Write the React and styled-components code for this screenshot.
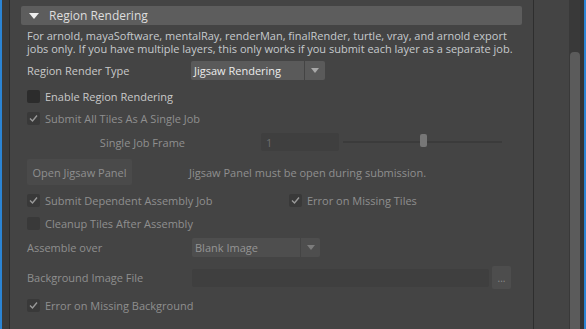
import React from "react";
import styled, { createGlobalStyle } from "styled-components";

const GlobalStyle = createGlobalStyle`
  html, body {
    margin: 0;
    padding: 0;
    background: #444444;
  }
  body {
    font-family: "Open Sans", "Liberation Sans", sans-serif;
    font-size: 11px;
  }
`;

const Page = styled.div`
  display: flex;
  width: 586px;
  height: 329px;
  overflow: hidden;
  background: #444444;
`;
const BlueEdge = styled.div`
  width: 2px;
  background: #2b84d4;
`;
const LeftGutter = styled.div`
  width: 7px;
  background: #3a3a3a;
  border-right: 1px solid #2a2a2a;
`;
const Content = styled.div`
  flex: 1;
  display: flex;
  flex-direction: column;
  padding: 6px 11px 0 11px;
  border-right: 1px solid #2e2e2e;
`;
const Spacer = styled.div`
  width: 35px;
`;
const ScrollTrack = styled.div`
  width: 11px;
  background: #393939;
  display: flex;
  flex-direction: column;
  justify-content: flex-end;
`;
const ScrollThumb = styled.div`
  height: 277px;
  margin: 0 0 0 1px;
  background: #5b5b5b;
  border-radius: 4px 4px 0 0;
`;
const DarkEdge = styled.div`
  width: 4px;
  background: #343434;
`;

const Header = styled.div`
  height: 19px;
  display: flex;
  align-items: center;
  background: #5d5d5d;
  border-radius: 2px;
  color: #dedede;
  font-size: 12px;
  padding-left: 8px;
`;
const Caret = styled.span`
  width: 0;
  height: 0;
  border-left: 5px solid transparent;
  border-right: 5px solid transparent;
  border-top: 6px solid #eeeeee;
  margin-right: 10px;
`;

const Body = styled.div`
  display: flex;
  flex-direction: column;
  padding-left: 6px;
`;
const Description = styled.p`
  margin: 4px 0 0 0;
  line-height: 13px;
  color: #c6cacd;
`;
const Row = styled.div`
  display: flex;
  align-items: center;
  height: ${(p) => p.$h || 18}px;
  margin-top: ${(p) => p.$mt || 0}px;
`;
const Label = styled.span`
  width: ${(p) => p.$w || 164}px;
  flex-shrink: 0;
  color: ${(p) => (p.$disabled ? "#8f8f8f" : "#c9c9c9")};
  text-align: ${(p) => (p.$right ? "right" : "left")};
  padding-right: ${(p) => (p.$right ? 76 : 0)}px;
  box-sizing: border-box;
`;
const Text = styled.span`
  color: ${(p) => (p.$disabled ? "#8f8f8f" : "#c9c9c9")};
  margin-left: ${(p) => p.$ml || 0}px;
`;

const Box = styled.span`
  width: 13px;
  height: 13px;
  border-radius: 2px;
  background: ${(p) => (p.$disabled ? "#393939" : "#2c2c2c")};
  display: inline-flex;
  align-items: center;
  justify-content: center;
  flex-shrink: 0;
  margin-left: ${(p) => p.$ml || 0}px;
  margin-right: 5px;
`;
const CheckGroup = styled.label`
  display: flex;
  align-items: center;
  width: ${(p) => (p.$w ? p.$w + "px" : "auto")};
`;

const Checkbox = ({ checked, disabled, label, ml, w }) => (
  <CheckGroup $w={w}>
    <Box $disabled={disabled} $ml={ml}>
      {checked && (
        <svg width="11" height="11" viewBox="0 0 11 11">
          <path d="M2 5.5 L4.5 8 L9 2.5" fill="none" stroke={disabled ? "#9a9a9a" : "#d0d0d0"} strokeWidth="1.4" />
        </svg>
      )}
    </Box>
    <Text $disabled={disabled}>{label}</Text>
  </CheckGroup>
);

const Select = styled.div`
  display: flex;
  height: 19px;
  gap: 1px;
`;
const SelectValue = styled.div`
  width: ${(p) => p.$w}px;
  background: ${(p) => (p.$disabled ? "#4e4e4e" : "#5a5a5a")};
  color: ${(p) => (p.$disabled ? "#959595" : "#ececec")};
  display: flex;
  align-items: center;
  padding-left: 3px;
  box-sizing: border-box;
  border-radius: 2px 0 0 2px;
`;
const SelectArrow = styled.div`
  width: ${(p) => p.$w}px;
  background: ${(p) => (p.$disabled ? "#4e4e4e" : "#5a5a5a")};
  display: flex;
  align-items: center;
  justify-content: center;
  border-radius: 0 2px 2px 0;
  &::after {
    content: "";
    border-left: 4px solid transparent;
    border-right: 4px solid transparent;
    border-top: 5px solid ${(p) => (p.$disabled ? "#7c7c7c" : "#a8a8a8")};
  }
`;

const Field = styled.div`
  width: ${(p) => p.$w}px;
  height: 18px;
  background: #3f3f3f;
  border-radius: 2px;
  color: #6e6e6e;
  display: flex;
  align-items: center;
  padding-left: 5px;
  box-sizing: border-box;
  margin-left: ${(p) => p.$ml || 0}px;
`;
const Slider = styled.div`
  position: relative;
  width: 159px;
  height: 2px;
  background: #3b3b3b;
  margin-left: 4px;
`;
const SliderThumb = styled.div`
  position: absolute;
  left: 77px;
  top: -7px;
  width: 7px;
  height: 13px;
  border-radius: 2px;
  background: #777777;
`;
const Button = styled.div`
  width: 105px;
  height: 26px;
  background: #4a4a4a;
  color: #8f8f8f;
  display: flex;
  align-items: center;
  justify-content: center;
  border-radius: 2px;
`;
const DotsButton = styled.div`
  width: 19px;
  height: 23px;
  margin-left: 3px;
  background: #4d4d4d;
  color: #8a8a8a;
  display: flex;
  align-items: center;
  justify-content: center;
  border-radius: 2px;
  font-size: 10px;
`;

export default function App() {
  return (
    <>
      <GlobalStyle />
      <Page>
        <BlueEdge />
        <LeftGutter />
        <Content>
          <Header>
            <Caret />
            Region Rendering
          </Header>
          <Body>
            <Description>
              For arnold, mayaSoftware, mentalRay, renderMan, finalRender, turtle, vray, and arnold export
              <br />
              jobs only. If you have multiple layers, this only works if you submit each layer as a separate job.
            </Description>
            <Row $h={19} $mt={6}>
              <Label>Region Render Type</Label>
              <Select>
                <SelectValue $w={113}>Jigsaw Rendering</SelectValue>
                <SelectArrow $w={20} />
              </Select>
            </Row>
            <Row $mt={7}>
              <Checkbox label="Enable Region Rendering" />
            </Row>
            <Row $mt={4}>
              <Checkbox checked disabled label="Submit All Tiles As A Single Job" />
            </Row>
            <Row $mt={6}>
              <Label $w={234} $right $disabled>Single Job Frame</Label>
              <Field $w={78}>1</Field>
              <Slider>
                <SliderThumb />
              </Slider>
            </Row>
            <Row $h={26} $mt={8}>
              <Button>Open Jigsaw Panel</Button>
              <Text $disabled $ml={57}>Jigsaw Panel must be open during submission.</Text>
            </Row>
            <Row $mt={6}>
              <Checkbox checked disabled label="Submit Dependent Assembly Job" w={262} />
              <Checkbox checked disabled label="Error on Missing Tiles" />
            </Row>
            <Row $mt={5}>
              <Checkbox disabled label="Cleanup Tiles After Assembly" />
            </Row>
            <Row $h={19} $mt={6}>
              <Label $w={165} $disabled>Assemble over</Label>
              <Select>
                <SelectValue $w={108} $disabled>Blank Image</SelectValue>
                <SelectArrow $w={19} $disabled />
              </Select>
            </Row>
            <Row $h={23} $mt={9}>
              <Label $w={165} $disabled>Background Image File</Label>
              <Field $w={297} />
              <DotsButton>...</DotsButton>
            </Row>
            <Row $mt={7}>
              <Checkbox checked disabled label="Error on Missing Background" />
            </Row>
          </Body>
        </Content>
        <Spacer />
        <ScrollTrack>
          <ScrollThumb />
        </ScrollTrack>
        <DarkEdge />
        <BlueEdge />
      </Page>
    </>
  );
}
